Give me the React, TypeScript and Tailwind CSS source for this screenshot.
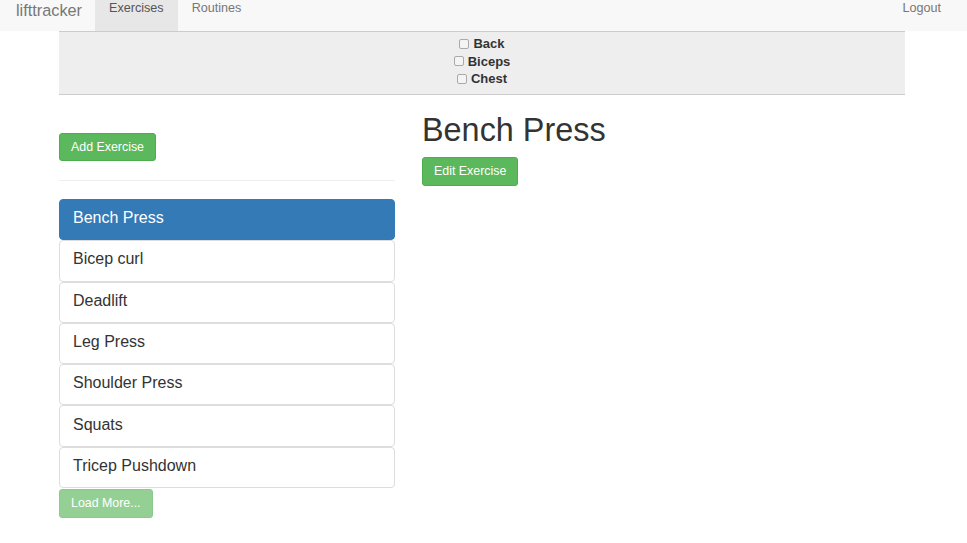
const exercises = [
  "Bench Press",
  "Bicep curl",
  "Deadlift",
  "Leg Press",
  "Shoulder Press",
  "Squats",
  "Tricep Pushdown",
];

const muscles = ["Back", "Biceps", "Chest"];

const App = () => {
  return (
    <div className="min-h-screen bg-white text-[#333] font-['Liberation_Sans',Arial,sans-serif]">
      {/* Navbar */}
      <nav className="h-[31px] bg-[#f8f8f8] flex items-start">
        <a className="pl-[16px] pr-[13px] text-[16.3px] leading-[20px] text-[#777]">lifttracker</a>
        <a className="h-[31px] px-[14px] bg-[#e7e7e7] text-[12.6px] leading-[17px] text-[#555]">Exercises</a>
        <a className="h-[31px] px-[14px] text-[12.6px] leading-[17px] text-[#777]">Routines</a>
        <a className="ml-auto pr-[26px] text-[12.6px] leading-[17px] text-[#777]">Logout</a>
      </nav>

      <div className="ml-[59px] w-[846px]">
        {/* Filter panel */}
        <div className="bg-[#eee] border-y border-[#ccc] h-[64px] pt-[3px] flex flex-col items-center">
          {muscles.map((m) => (
            <label key={m} className="flex items-center gap-[4px] text-[13px] leading-[17.5px] font-bold text-[#333]">
              <span className="w-[10px] h-[10px] border border-[#aaa] rounded-[2px] bg-[#f4f4f4]" />
              {m}
            </label>
          ))}
        </div>

        <div className="flex gap-[27px]">
          {/* Left column */}
          <div className="w-[336px]">
            <button className="mt-[38px] h-[28px] px-[11px] rounded-[3px] bg-[#5cb85c] border border-[#4cae4c] text-white text-[12.4px]">
              Add Exercise
            </button>
            <hr className="mt-[19px] mb-[18px] border-[#eee]" />
            <div className="flex flex-col">
              {exercises.map((e, i) => (
                <div
                  key={e}
                  className={
                    i === 0
                      ? "h-[41.3px] px-[13px] flex items-center pb-[3px] rounded-[4px] border border-[#337ab7] bg-[#337ab7] text-white text-[16px]"
                      : "h-[41.3px] px-[13px] flex items-center pb-[3px] rounded-[4px] border border-[#ddd] bg-white text-[#333] text-[16px]"
                  }
                >
                  {e}
                </div>
              ))}
            </div>
            <button className="mt-[1px] h-[29px] px-[11px] rounded-[3px] bg-[#5cb85c] border border-[#4cae4c] text-white text-[12.4px] opacity-65">
              Load More...
            </button>
          </div>

          {/* Right column */}
          <div className="flex-1">
            <h2 className="mt-[17px] text-[32.4px] leading-[36px] text-[#333]">Bench Press</h2>
            <button className="mt-[9px] h-[29px] px-[11px] rounded-[3px] bg-[#5cb85c] border border-[#4cae4c] text-white text-[12.4px]">
              Edit Exercise
            </button>
          </div>
        </div>
      </div>
    </div>
  );
};

export default App;
